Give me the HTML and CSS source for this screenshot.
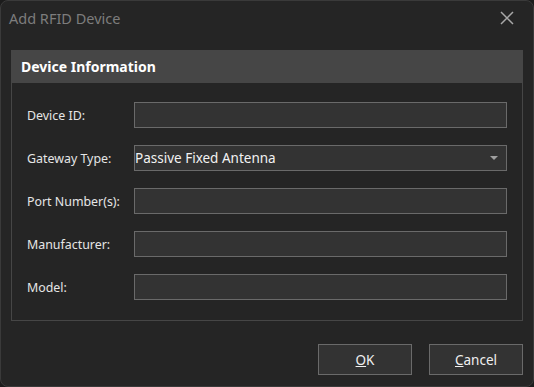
FILE: index.html
```html
<!DOCTYPE html>
<html lang="en">
  <head>
    <meta charset="UTF-8" />
    <title>Add RFID Device</title>
    <link rel="stylesheet" href="styles.css">
  </head>
  <body>
    <div class="dialog">
      <div class="titlebar">
        <span class="title">Add RFID Device</span>
        <svg class="close" width="14" height="14" viewBox="0 0 14 14">
          <path d="M1 1 L13 13 M13 1 L1 13" stroke="#a8a8a8" stroke-width="1.5" fill="none" />
        </svg>
      </div>
      <div class="content">
        <div class="group">
          <div class="group-header">Device Information</div>
          <div class="group-body">
            <label>Device ID:</label>
            <div class="input"></div>
            <label>Gateway Type:</label>
            <div class="input select">
              <span>Passive Fixed Antenna</span>
              <span class="arrow"></span>
            </div>
            <label>Port Number(s):</label>
            <div class="input"></div>
            <label>Manufacturer:</label>
            <div class="input"></div>
            <label>Model:</label>
            <div class="input"></div>
          </div>
        </div>
        <div class="buttons">
          <div class="btn"><u>O</u>K</div>
          <div class="btn"><u>C</u>ancel</div>
        </div>
      </div>
    </div>
  </body>
</html>
```

FILE: styles.css
```css
body {
  margin: 0;
  background-color: #1c1c1c;
  font-family: "Noto Sans", "Open Sans", sans-serif;
}
.dialog {
  width: 534px;
  height: 387px;
  box-sizing: border-box;
  background-color: #252525;
  border: 1px solid #3a3a3a;
  border-radius: 8px;
}
.titlebar {
  height: 34px;
  display: flex;
  align-items: center;
  justify-content: space-between;
  padding: 0 19px 0 8px;
}
.title {
  color: #7d7d7d;
  font-size: 14.5px;
}
.content {
  padding: 15px 10px 0 10px;
}
.group {
  border: 1px solid #464646;
}
.group-header {
  height: 32px;
  background-color: #464646;
  color: #ffffff;
  font-weight: bold;
  font-size: 14px;
  display: flex;
  align-items: center;
  padding: 0 0 2px 9px;
  box-sizing: border-box;
}
.group-body {
  display: grid;
  grid-template-columns: 107px 1fr;
  row-gap: 17px;
  align-items: center;
  padding: 19px 15px 20px 15px;
}
.group-body label {
  color: #e6e6e6;
  font-size: 12.4px;
}
.input {
  height: 26px;
  box-sizing: border-box;
  background-color: #333333;
  border: 1px solid #6a6a6a;
}
.select {
  display: flex;
  align-items: center;
  justify-content: space-between;
  padding: 0 8px 0 0;
  color: #f2f2f2;
  font-size: 13.5px;
}
.arrow {
  width: 0;
  height: 0;
  border-left: 4px solid transparent;
  border-right: 4px solid transparent;
  border-top: 4px solid #a0a0a0;
}
.buttons {
  display: flex;
  justify-content: flex-end;
  gap: 17px;
  margin-top: 23px;
}
.btn {
  width: 94px;
  height: 31px;
  box-sizing: border-box;
  background-color: #333333;
  border: 1px solid #6a6a6a;
  color: #f0f0f0;
  font-size: 13.5px;
  display: flex;
  align-items: center;
  justify-content: center;
}
```
